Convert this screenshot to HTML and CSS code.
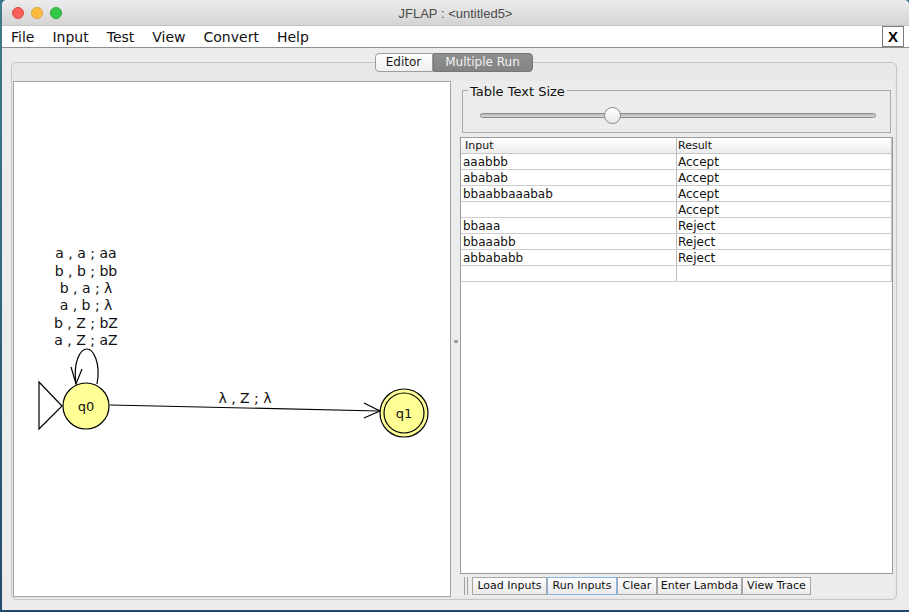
FILE: index.html
```html
<!DOCTYPE html>
<html>
<head>
<meta charset="utf-8">
<title>JFLAP</title>
<link rel="stylesheet" href="styles.css">
</head>
<body>
<div class="window">
  <div class="titlebar">
    <div class="lights"><span class="light red"></span><span class="light yellow"></span><span class="light green"></span></div>
    <div class="title">JFLAP : &lt;untitled5&gt;</div>
    <div></div>
  </div>
  <div class="menubar">
    <nav class="menus"><span>File</span><span>Input</span><span>Test</span><span>View</span><span>Convert</span><span>Help</span></nav>
    <div class="close">X</div>
  </div>
  <div class="content">
    <div class="tabs"><span class="tab first">Editor</span><span class="tab active">Multiple Run</span></div>
    <div class="panel">
      <div class="canvas">
        <svg width="436" height="514" viewBox="14 82 436 514" xmlns="http://www.w3.org/2000/svg">
          <g class="labels" text-anchor="middle">
            <text x="86" y="258">a , a ; aa</text>
            <text x="86" y="275.5">b , b ; bb</text>
            <text x="86" y="293">b , a ; λ</text>
            <text x="86" y="310">a , b ; λ</text>
            <text x="86" y="327.5">b , Z ; bZ</text>
            <text x="86" y="345">a , Z ; aZ</text>
            <text x="245" y="403">λ , Z ; λ</text>
          </g>
          <path d="M97 384 C101 362 93 349 87 349 C80 349 73 362 76 384" fill="none" stroke="#000" stroke-width="1.2"/>
          <path d="M71 367 L76 384 L82 369" fill="none" stroke="#000" stroke-width="1.2"/>
          <line x1="110" y1="405" x2="379" y2="411" stroke="#000" stroke-width="1.2"/>
          <path d="M364 403 L380 411 L364 418" fill="none" stroke="#000" stroke-width="1.2"/>
          <polygon points="39,382 62,406 39,429" fill="#fff" stroke="#000" stroke-width="1.2"/>
          <circle cx="86" cy="406" r="23" fill="#ffff96" stroke="#000" stroke-width="1.2"/>
          <circle cx="404" cy="413" r="24" fill="#ffff96" stroke="#000" stroke-width="1.2"/>
          <circle cx="404" cy="413" r="20" fill="none" stroke="#000" stroke-width="1.2"/>
          <g class="state" text-anchor="middle">
            <text x="86" y="411">q0</text>
            <text x="404" y="418">q1</text>
          </g>
        </svg>
      </div>
      <div class="splitter"><span class="grip"></span></div>
      <div class="right">
        <div class="group">
          <span class="legend">Table Text Size</span>
          <div class="track"><span class="thumb"></span></div>
        </div>
        <div class="table">
          <div class="th">Input</div><div class="th">Result</div>
          <div class="td">aaabbb</div><div class="td">Accept</div>
          <div class="td">ababab</div><div class="td">Accept</div>
          <div class="td">bbaabbaaabab</div><div class="td">Accept</div>
          <div class="td"></div><div class="td">Accept</div>
          <div class="td">bbaaa</div><div class="td">Reject</div>
          <div class="td">bbaaabb</div><div class="td">Reject</div>
          <div class="td">abbababb</div><div class="td">Reject</div>
          <div class="td"></div><div class="td"></div>
        </div>
        <div class="toolbar">
          <span class="tgrip"></span>
          <span class="btn w75">Load Inputs</span>
          <span class="btn w70 focus">Run Inputs</span>
          <span class="btn w40">Clear</span>
          <span class="btn w85">Enter Lambda</span>
          <span class="btn w69">View Trace</span>
        </div>
      </div>
    </div>
  </div>
</div>
</body>
</html>
```
FILE: styles.css
```css
* { box-sizing: border-box; }
html, body { margin: 0; height: 100%; }
body {
  background: linear-gradient(#3d7c8c, #234a6c);
  font-family: "DejaVu Sans", sans-serif;
  overflow: hidden;
}
.window {
  margin-left: 2px;
  width: 907px;
  height: 610px;
  background: #ececec;
  border-radius: 5px 5px 0 0;
  display: flex;
  flex-direction: column;
  overflow: hidden;
}
.titlebar {
  height: 25px;
  flex: none;
  display: grid;
  grid-template-columns: 1fr auto 1fr;
  align-items: center;
  background: linear-gradient(#ececec, #d4d4d4);
}
.lights { display: flex; gap: 7px; padding-left: 10px; }
.light { width: 12px; height: 12px; border-radius: 50%; }
.red { background: #fc605b; border: 1px solid #de4a45; }
.yellow { background: #fdbc40; border: 1px solid #dea236; }
.green { background: #34c84a; border: 1px solid #27aa35; }
.title {
  font-family: "Liberation Sans", sans-serif;
  font-size: 13px;
  color: #4b4b4b;
  padding-top: 1px;
}
.menubar {
  height: 23px;
  flex: none;
  background: #fff;
  border-top: 1px solid #c4c4c4;
  border-bottom: 1px solid #8e8e8e;
  display: flex;
  align-items: center;
}
.menus { display: flex; padding-left: 9px; font-size: 14px; color: #111; }
.menus span { margin-right: 18px; }
.close {
  margin-left: auto;
  margin-right: 5px;
  width: 22px;
  height: 21px;
  border: 1px solid #7a7a7a;
  background: #fff;
  font-size: 15px;
  font-weight: bold;
  line-height: 19px;
  text-align: center;
  font-family: "Liberation Sans", sans-serif;
}
.content {
  flex: 1;
  display: flex;
  flex-direction: column;
  padding-top: 5px;
}
.tabs {
  display: flex;
  justify-content: center;
  height: 19px;
  padding-right: 4px;
  position: relative;
  z-index: 1;
  font-size: 12px;
}
.tab {
  height: 19px;
  line-height: 17px;
  text-align: center;
  border: 1px solid #9c9c9c;
  background: linear-gradient(#ffffff, #f0f0f0);
  color: #1a1a1a;
}
.tab.first { width: 58px; border-radius: 4px 0 0 4px; }
.tab.active {
  width: 100px;
  background: linear-gradient(#8f8f8f, #838383);
  border-color: #767676;
  color: #f2f2f2;
  border-radius: 0 4px 4px 0;
}
.panel {
  flex: 1;
  margin: -10px 12px 10px 9px;
  border: 1px solid #c6c6c6;
  border-radius: 5px;
  background: #e8e8e8;
  padding: 18px 2px 2px 1px;
  display: flex;
}
.canvas {
  width: 438px;
  flex: none;
  border: 1px solid #a4a4a4;
  background: #fff;
  overflow: hidden;
}
.canvas svg { display: block; }
.labels text { font-family: "DejaVu Sans", sans-serif; font-size: 14px; fill: #111; }
.state text { font-family: "DejaVu Sans", sans-serif; font-size: 13px; fill: #111; }
.splitter {
  width: 9px;
  flex: none;
  display: flex;
  align-items: center;
  justify-content: center;
  background: #ececec;
}
.grip { width: 4px; height: 3px; background: #9a9a9a; border-radius: 1px; margin-top: 4px; }
.right {
  flex: 1;
  display: flex;
  flex-direction: column;
  background: #ececec;
}
.group {
  margin: 9px 3px 0 2px;
  height: 43px;
  border: 1px solid #a9a9a9;
  position: relative;
  padding: 22px 14px 0 17px;
}
.legend {
  position: absolute;
  top: -8px;
  left: 5px;
  padding: 0 2px;
  background: #ececec;
  font-size: 13px;
  line-height: 17px;
  color: #111;
}
.track {
  position: relative;
  height: 5px;
  border-radius: 3px;
  border: 1px solid #8c8c8c;
  background: linear-gradient(#b8b8b8, #d8d8d8);
}
.thumb {
  position: absolute;
  left: 123px;
  top: -7px;
  width: 17px;
  height: 17px;
  border-radius: 50%;
  border: 1px solid #8a8a8a;
  background: linear-gradient(#ffffff, #e8e8e8);
}
.table {
  flex: 1;
  margin: 4px 1px 0 0;
  border: 1px solid #9b9b9b;
  background: #fff;
  display: grid;
  grid-template-columns: 216px 215px;
  grid-auto-rows: 16px;
  align-content: start;
  font-size: 12px;
  color: #111;
}
.th {
  height: 16px;
  font-size: 11px;
  line-height: 15px;
  padding-left: 4px;
  background: linear-gradient(#ffffff, #ededed);
  border-bottom: 1px solid #c8c8c8;
  border-right: 1px solid #bdbdbd;
}
.td {
  border-bottom: 1px solid #cdcdcd;
  border-right: 1px solid #bdbdbd;
  padding-left: 2px;
  line-height: 16px;
  white-space: nowrap;
}
.th:nth-child(2), .td:nth-child(even) { padding-left: 1px; }
.toolbar {
  height: 18px;
  margin: 3px 0 2px 0;
  display: flex;
  font-size: 11px;
}
.tgrip {
  width: 4px;
  height: 18px;
  margin: 0 4px 0 4px;
  border-left: 1px solid #a0a0a0;
  border-right: 1px solid #a0a0a0;
}
.btn {
  height: 18px;
  line-height: 16px;
  text-align: center;
  border: 1px solid #a6a6a6;
  background: linear-gradient(#fdfdfd, #eaeaea);
  color: #111;
  white-space: nowrap;
}
.btn.focus { border-color: #86b6e6; }
.w75 { width: 75px; }
.w70 { width: 70px; }
.w40 { width: 40px; }
.w85 { width: 85px; }
.w69 { width: 69px; }
```
